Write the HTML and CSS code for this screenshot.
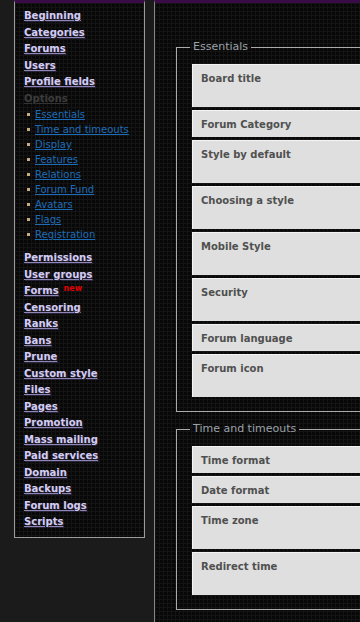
FILE: index.html
```html
<!DOCTYPE html>
<html lang="en">
<head>
<meta charset="utf-8">
<title>Options</title>
<link rel="stylesheet" href="styles.css">
</head>
<body>
<div class="page">
  <nav class="sidebar">
    <ul class="menu">
      <li><a href="#">Beginning</a></li>
      <li><a href="#">Categories</a></li>
      <li><a href="#">Forums</a></li>
      <li><a href="#">Users</a></li>
      <li><a href="#">Profile fields</a></li>
      <li><a href="#" class="current">Options</a></li>
    </ul>
    <ul class="submenu">
      <li><a href="#">Essentials</a></li>
      <li><a href="#">Time and timeouts</a></li>
      <li><a href="#">Display</a></li>
      <li><a href="#">Features</a></li>
      <li><a href="#">Relations</a></li>
      <li><a href="#">Forum Fund</a></li>
      <li><a href="#">Avatars</a></li>
      <li><a href="#">Flags</a></li>
      <li><a href="#">Registration</a></li>
    </ul>
    <ul class="menu">
      <li><a href="#">Permissions</a></li>
      <li><a href="#">User groups</a></li>
      <li><a href="#">Forms</a><sup class="new">new</sup></li>
      <li><a href="#">Censoring</a></li>
      <li><a href="#">Ranks</a></li>
      <li><a href="#">Bans</a></li>
      <li><a href="#">Prune</a></li>
      <li><a href="#">Custom style</a></li>
      <li><a href="#">Files</a></li>
      <li><a href="#">Pages</a></li>
      <li><a href="#">Promotion</a></li>
      <li><a href="#">Mass mailing</a></li>
      <li><a href="#">Paid services</a></li>
      <li><a href="#">Domain</a></li>
      <li><a href="#">Backups</a></li>
      <li><a href="#">Forum logs</a></li>
      <li><a href="#">Scripts</a></li>
    </ul>
  </nav>
  <main class="panel">
    <fieldset class="group">
      <legend>Essentials</legend>
      <div class="row tall">Board title</div>
      <div class="row">Forum Category</div>
      <div class="row tall">Style by default</div>
      <div class="row tall">Choosing a style</div>
      <div class="row tall">Mobile Style</div>
      <div class="row tall">Security</div>
      <div class="row">Forum language</div>
      <div class="row tall">Forum icon</div>
    </fieldset>
    <fieldset class="group">
      <legend>Time and timeouts</legend>
      <div class="row">Time format</div>
      <div class="row">Date format</div>
      <div class="row tall">Time zone</div>
      <div class="row tall">Redirect time</div>
    </fieldset>
    <fieldset class="group">
      <legend>Display</legend>
    </fieldset>
  </main>
</div>
</body>
</html>
```

FILE: styles.css
```css
html, body {
  margin: 0;
  padding: 0;
}

body {
  background: #1b1b1b;
  font-family: "DejaVu Sans", Verdana, sans-serif;
  font-size: 10px;
  overflow: hidden;
}

.page {
  display: flex;
  align-items: flex-start;
  gap: 9px;
  padding-left: 14px;
}

.sidebar,
.panel {
  background-color: #080808;
  background-image:
    linear-gradient(#141414 1px, transparent 1px),
    linear-gradient(90deg, #141414 1px, transparent 1px);
  background-size: 4px 4px;
}

.sidebar {
  flex: none;
  width: 120px;
  border: 1px solid #9c9c9c;
  border-top: 3px solid #3a0c47;
  padding: 5px 0 6px 9px;
  box-sizing: content-box;
}

.menu,
.submenu {
  list-style: none;
  margin: 0;
  padding: 0;
}

.menu li {
  line-height: 16.5px;
  white-space: nowrap;
}

.menu a {
  color: #d4cdf4;
  font-weight: bold;
  text-decoration: underline;
  text-decoration-color: #8f86b8;
  text-shadow: 1px 1px 0 #2a2438;
}

.menu a.current {
  color: #3c3c3c;
  text-decoration-color: #333;
  text-shadow: none;
}

.new {
  color: #e00000;
  font-weight: bold;
  font-size: 8px;
  margin-left: 5px;
  vertical-align: 3px;
  line-height: 0;
}

.submenu {
  padding-left: 3px;
  margin-bottom: 8px;
}

.submenu li {
  display: flex;
  align-items: center;
  line-height: 15px;
  white-space: nowrap;
}

.submenu li::before {
  content: "";
  width: 3px;
  height: 3px;
  background: #c9ab7e;
  margin-right: 5px;
  flex: none;
}

.submenu a {
  color: #1d6cb8;
  text-decoration: underline;
}

.panel {
  flex: 1;
  min-width: 0;
  min-height: 100vh;
  overflow: hidden;
  border-left: 1px solid #858585;
  border-top: 3px solid #3a0c47;
  padding-top: 37px;
  box-sizing: border-box;
}

.group {
  width: 320px;
  margin: 0 0 10px 21px;
  padding: 10px 0 14px 15px;
  border: 1px solid #ababab;
  min-inline-size: 0;
  box-sizing: border-box;
  display: flex;
  flex-direction: column;
  gap: 3px;
}

.group legend {
  color: #9ba1a8;
  font-size: 11px;
  line-height: 14px;
  padding: 0 3px;
  margin-left: -2px;
}

.row {
  background: #dedfde;
  border-top: 1px solid #f4f4f4;
  border-left: 1px solid #f4f4f4;
  color: #505050;
  font-weight: bold;
  font-size: 10px;
  line-height: 12px;
  padding: 8px 8px 6px 8px;
  height: 27px;
  box-sizing: border-box;
}

.row.tall {
  height: 43px;
  padding-top: 8px;
}
```
